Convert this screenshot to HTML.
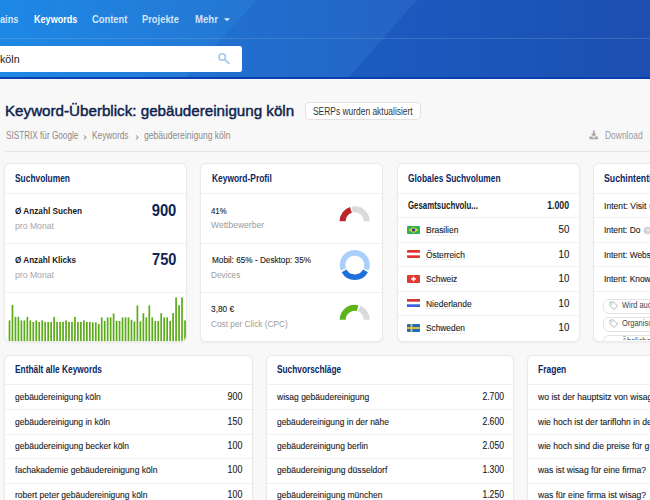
<!DOCTYPE html>
<html><head><meta charset="utf-8">
<style>
html,body{margin:0;padding:0;}
body{width:650px;height:500px;overflow:hidden;position:relative;background:#f8f8f8;font-family:"Liberation Sans",sans-serif;}
.abs{position:absolute;}
.t{position:absolute;white-space:nowrap;line-height:1;font-family:"Liberation Sans",sans-serif;}
#hdr{position:absolute;left:0;top:0;}
#search{position:absolute;left:-10px;top:45.5px;width:252px;height:26.5px;background:#fff;border-radius:2.5px;}
.card{position:absolute;background:#fff;border:1px solid #eaeaea;border-radius:6px;box-shadow:0 0.5px 2px rgba(0,0,0,0.05);box-sizing:border-box;overflow:hidden;}
.sep{position:absolute;height:1px;background:#f0f0f0;}
.dot{position:absolute;height:0;border-bottom:1px dotted #dedede;}
.pill{position:absolute;border:1px solid #e3e3e3;border-radius:6px;background:#fff;box-sizing:border-box;}
</style></head><body>
<svg id="hdr" width="650" height="79" viewBox="0 0 650 79">
<defs>
<linearGradient id="gA" gradientUnits="userSpaceOnUse" x1="0" y1="0" x2="260" y2="0"><stop offset="0" stop-color="#1e88e5"/><stop offset="1" stop-color="#2576d2"/></linearGradient>
<linearGradient id="gB" gradientUnits="userSpaceOnUse" x1="180" y1="0" x2="420" y2="0"><stop offset="0" stop-color="#1f72d2"/><stop offset="1" stop-color="#2563c3"/></linearGradient>
<linearGradient id="gC" gradientUnits="userSpaceOnUse" x1="340" y1="0" x2="650" y2="0"><stop offset="0" stop-color="#1b5cc2"/><stop offset="1" stop-color="#1c4fb0"/></linearGradient>
</defs>
<rect x="0" y="0" width="650" height="79" fill="url(#gC)"/>
<polygon points="0,0 417,0 347.5,79 0,79" fill="url(#gB)"/>
<polygon points="0,0 257,0 184.3,79 0,79" fill="url(#gA)"/>
<rect x="0" y="38" width="650" height="1" fill="rgba(255,255,255,0.13)"/>
<rect x="0" y="77" width="650" height="2" fill="#0a3fb2"/>
</svg>
<div id="search"></div>
<svg class="abs" style="left:216px;top:51px" width="16" height="16" viewBox="0 0 16 16"><circle cx="6.2" cy="6" r="3.2" fill="none" stroke="#a3c8f0" stroke-width="1.6"/><line x1="8.6" y1="8.4" x2="12.9" y2="12.4" stroke="#a3c8f0" stroke-width="1.8" stroke-linecap="round"/></svg>
<svg class="abs" style="left:222px;top:16.5px" width="10" height="6" viewBox="0 0 10 6"><path d="M2,1.2 L8,1.2 L5,4.2 Z" fill="rgba(255,255,255,0.85)"/></svg>

<div class="abs" style="left:305px;top:101.5px;width:115.5px;height:18.5px;border:1px solid #e2e2e2;border-radius:4.5px;background:#fff;box-sizing:border-box"></div>
<svg class="abs" style="left:588px;top:129px" width="12" height="12" viewBox="0 0 12 12"><rect x="4.9" y="1.5" width="1.8" height="4" fill="#a9a9a9"/><path d="M2.9,4.8 H8.7 L5.8,7.9 Z" fill="#a9a9a9"/><rect x="1.2" y="7.4" width="8.9" height="2.8" rx="0.6" fill="#a9a9a9"/><path d="M3.6,7.4 H8 L5.8,9.2 Z" fill="#f8f8f8"/><path d="M3.9,7.4 H7.7 L5.8,9 Z" fill="#a9a9a9" opacity="0"/></svg>
<svg class="abs" style="left:81px;top:133px" width="8" height="8" viewBox="0 0 8 8"><path d="M3,2.4 L5,4.4 L3,6.4" fill="none" stroke="#a0a0a0" stroke-width="1.1"/></svg>
<svg class="abs" style="left:133px;top:133px" width="8" height="8" viewBox="0 0 8 8"><path d="M3,2.4 L5,4.4 L3,6.4" fill="none" stroke="#a0a0a0" stroke-width="1.1"/></svg>
<div class="abs" style="left:5px;top:150.5px;width:645px;height:1px;background:#e6e6e6"></div>

<!-- top cards -->
<div class="card" style="left:4px;top:163px;width:183px;height:179px">
 <div class="sep" style="left:0;top:29.3px;width:182px"></div>
 <div class="sep" style="left:0;top:78.8px;width:182px"></div>
 <div class="sep" style="left:0;top:127.6px;width:182px"></div>
 <svg class="abs" style="left:0px;top:128px" width="185" height="52" viewBox="0 0 185 52"><g fill="#5aab17">
<rect x="3.65" y="28.40" width="1.7" height="23.00"/>
<rect x="6.62" y="12.90" width="1.7" height="38.50"/>
<rect x="9.60" y="24.90" width="1.7" height="26.50"/>
<rect x="12.57" y="24.90" width="1.7" height="26.50"/>
<rect x="15.55" y="28.40" width="1.7" height="23.00"/>
<rect x="18.52" y="28.40" width="1.7" height="23.00"/>
<rect x="21.50" y="24.90" width="1.7" height="26.50"/>
<rect x="24.47" y="28.40" width="1.7" height="23.00"/>
<rect x="27.45" y="29.90" width="1.7" height="21.50"/>
<rect x="30.42" y="28.40" width="1.7" height="23.00"/>
<rect x="33.40" y="29.90" width="1.7" height="21.50"/>
<rect x="36.37" y="28.40" width="1.7" height="23.00"/>
<rect x="39.34" y="29.90" width="1.7" height="21.50"/>
<rect x="42.32" y="29.90" width="1.7" height="21.50"/>
<rect x="45.29" y="29.90" width="1.7" height="21.50"/>
<rect x="48.27" y="24.90" width="1.7" height="26.50"/>
<rect x="51.24" y="29.90" width="1.7" height="21.50"/>
<rect x="54.22" y="29.90" width="1.7" height="21.50"/>
<rect x="57.19" y="29.90" width="1.7" height="21.50"/>
<rect x="60.17" y="28.40" width="1.7" height="23.00"/>
<rect x="63.14" y="29.90" width="1.7" height="21.50"/>
<rect x="66.12" y="29.90" width="1.7" height="21.50"/>
<rect x="69.09" y="24.90" width="1.7" height="26.50"/>
<rect x="72.07" y="29.90" width="1.7" height="21.50"/>
<rect x="75.04" y="29.90" width="1.7" height="21.50"/>
<rect x="78.01" y="28.40" width="1.7" height="23.00"/>
<rect x="80.99" y="29.90" width="1.7" height="21.50"/>
<rect x="83.96" y="29.90" width="1.7" height="21.50"/>
<rect x="86.94" y="30.40" width="1.7" height="21.00"/>
<rect x="89.91" y="30.40" width="1.7" height="21.00"/>
<rect x="92.89" y="31.90" width="1.7" height="19.50"/>
<rect x="95.86" y="25.40" width="1.7" height="26.00"/>
<rect x="98.84" y="28.90" width="1.7" height="22.50"/>
<rect x="101.81" y="25.40" width="1.7" height="26.00"/>
<rect x="104.79" y="25.40" width="1.7" height="26.00"/>
<rect x="107.76" y="21.40" width="1.7" height="30.00"/>
<rect x="110.73" y="28.90" width="1.7" height="22.50"/>
<rect x="113.71" y="28.90" width="1.7" height="22.50"/>
<rect x="116.68" y="25.40" width="1.7" height="26.00"/>
<rect x="119.66" y="25.40" width="1.7" height="26.00"/>
<rect x="122.63" y="25.40" width="1.7" height="26.00"/>
<rect x="125.61" y="27.90" width="1.7" height="23.50"/>
<rect x="128.58" y="29.40" width="1.7" height="22.00"/>
<rect x="131.56" y="13.40" width="1.7" height="38.00"/>
<rect x="134.53" y="29.40" width="1.7" height="22.00"/>
<rect x="137.51" y="21.20" width="1.7" height="30.20"/>
<rect x="140.48" y="25.40" width="1.7" height="26.00"/>
<rect x="143.46" y="13.40" width="1.7" height="38.00"/>
<rect x="146.43" y="25.40" width="1.7" height="26.00"/>
<rect x="149.40" y="28.90" width="1.7" height="22.50"/>
<rect x="152.38" y="28.90" width="1.7" height="22.50"/>
<rect x="155.35" y="21.20" width="1.7" height="30.20"/>
<rect x="158.33" y="25.40" width="1.7" height="26.00"/>
<rect x="161.30" y="25.40" width="1.7" height="26.00"/>
<rect x="164.28" y="28.90" width="1.7" height="22.50"/>
<rect x="167.25" y="21.00" width="1.7" height="30.40"/>
<rect x="170.23" y="5.40" width="1.7" height="46.00"/>
<rect x="173.20" y="13.20" width="1.7" height="38.20"/>
<rect x="176.18" y="5.40" width="1.7" height="46.00"/>
<rect x="179.15" y="28.40" width="1.7" height="23.00"/>
 </g></svg>
</div>
<div class="card" style="left:200px;top:163px;width:183px;height:179px">
 <div class="sep" style="left:0;top:29.3px;width:183px"></div>
 <div class="sep" style="left:0;top:78.8px;width:183px"></div>
 <div class="sep" style="left:0;top:127.6px;width:183px"></div>
</div>
<svg class="abs" style="left:335px;top:203px" width="40" height="22" viewBox="0 0 40 22"><path d="M4.60,18.30 A15.1,15.1 0 0 1 14.95,3.97 L16.87,9.76 A9,9 0 0 0 10.70,18.30 Z" fill="#bb262b"/><path d="M16.39,3.57 A15.1,15.1 0 0 1 34.80,18.30 L28.70,18.30 A9,9 0 0 0 17.73,9.52 Z" fill="#dadada"/></svg>
<svg class="abs" style="left:335px;top:245px" width="40" height="40" viewBox="0 0 40 40"><path d="M33.78,25.53 A15,15 0 1 0 5.82,25.53 L11.04,23.51 A9.4,9.4 0 1 1 28.56,23.51 Z" fill="#a9cffb"/><path d="M32.95,27.32 A15,15 0 0 1 6.65,27.32 L11.56,24.62 A9.4,9.4 0 0 0 28.04,24.62 Z" fill="#1f6fda"/></svg>
<svg class="abs" style="left:335px;top:298px" width="40" height="25" viewBox="0 0 40 25"><path d="M4.60,21.80 A15.1,15.1 0 0 1 23.40,7.16 L21.91,13.07 A9,9 0 0 0 10.70,21.80 Z" fill="#5cb31a"/><path d="M25.31,7.78 A15.1,15.1 0 0 1 34.80,21.80 L28.70,21.80 A9,9 0 0 0 23.04,13.44 Z" fill="#dadada"/></svg>
<div class="card" style="left:397px;top:163px;width:183px;height:179px">
 <div class="sep" style="left:0;top:29.3px;width:182px"></div>
 <div class="sep" style="left:0;top:53.0px;width:182px"></div>
 <div class="sep" style="left:0;top:77.6px;width:182px"></div>
 <div class="sep" style="left:0;top:102.2px;width:182px"></div>
 <div class="sep" style="left:0;top:126.8px;width:182px"></div>
 <div class="sep" style="left:0;top:151.4px;width:182px"></div>
</div>
<!-- flags -->
<svg class="abs" style="left:407.2px;top:225.8px" width="13" height="8" viewBox="0 0 13 8"><rect width="13" height="8" rx="1" fill="#2bb35a"/><path d="M6.5,1 L11.5,4 L6.5,7 L1.5,4 Z" fill="#f5d41a"/><circle cx="6.5" cy="4" r="1.8" fill="#2c47a5"/></svg>
<svg class="abs" style="left:407.2px;top:250.2px" width="13" height="8" viewBox="0 0 13 8"><rect width="13" height="8" rx="1" fill="#e2322f"/><rect y="2.7" width="13" height="2.6" fill="#fff"/></svg>
<svg class="abs" style="left:407.2px;top:274.6px" width="13" height="8" viewBox="0 0 13 8"><rect width="13" height="8" rx="1" fill="#e03a31"/><rect x="5.7" y="1.7" width="1.6" height="4.6" fill="#fff"/><rect x="4.2" y="3.2" width="4.6" height="1.6" fill="#fff"/></svg>
<svg class="abs" style="left:407.2px;top:299px" width="13" height="8" viewBox="0 0 13 8"><rect width="13" height="8" rx="1" fill="#fff"/><rect width="13" height="2.7" fill="#d83434"/><rect y="5.3" width="13" height="2.7" fill="#3c5fdc"/></svg>
<svg class="abs" style="left:407.2px;top:324px" width="13" height="8" viewBox="0 0 13 8"><rect width="13" height="8" rx="1" fill="#1f6cbd"/><rect x="3.6" width="1.7" height="8" fill="#f7c72b"/><rect y="3.15" width="13" height="1.7" fill="#f7c72b"/></svg>
<div class="dot" style="left:426px;top:234.5px;width:32.4px"></div>
<div class="dot" style="left:426px;top:259.1px;width:38.9px"></div>
<div class="dot" style="left:426px;top:283.6px;width:31.3px"></div>
<div class="dot" style="left:426px;top:308px;width:45.7px"></div>
<div class="dot" style="left:426px;top:332.6px;width:38.9px"></div>

<div class="card" style="left:593px;top:163px;width:70px;height:179px">
 <div class="sep" style="left:0;top:29.2px;width:70px"></div>
 <div class="sep" style="left:0;top:53.2px;width:70px"></div>
 <div class="sep" style="left:0;top:78.0px;width:70px"></div>
 <div class="sep" style="left:0;top:102.0px;width:70px"></div>
 <div class="sep" style="left:0;top:127.0px;width:70px"></div>
 <div class="pill" style="left:9.3px;top:134.5px;width:80px;height:15.5px"></div>
 <div class="pill" style="left:9.3px;top:152.5px;width:80px;height:15.5px"></div>
 <div class="pill" style="left:9.3px;top:170.5px;width:80px;height:15.5px"></div>
</div>
<svg class="abs" style="left:642.5px;top:226px" width="9" height="9" viewBox="0 0 9 9"><circle cx="4.5" cy="4.5" r="3.7" fill="#cfcfcf"/><text x="4.5" y="6.8" font-size="6" text-anchor="middle" fill="#fff" font-family="Liberation Sans" font-weight="700">?</text></svg>
<svg class="abs" style="left:647.5px;top:201.5px" width="9" height="9" viewBox="0 0 9 9"><circle cx="4.5" cy="4.5" r="3.7" fill="#cfcfcf"/></svg>
<svg class="abs" style="left:608px;top:300px" width="11" height="11" viewBox="0 0 11 11"><path d="M2,2 H5.5 L9.5,6 L6,9.5 L2,5.5 Z" fill="none" stroke="#b5b5b5" stroke-width="1"/><circle cx="4" cy="4" r="0.7" fill="#b5b5b5"/></svg>
<svg class="abs" style="left:608px;top:318px" width="11" height="11" viewBox="0 0 11 11"><path d="M2,2 H5.5 L9.5,6 L6,9.5 L2,5.5 Z" fill="none" stroke="#b5b5b5" stroke-width="1"/><circle cx="4" cy="4" r="0.7" fill="#b5b5b5"/></svg>

<!-- bottom cards -->
<div class="card" style="left:4px;top:355px;width:249px;height:160px">
 <div class="sep" style="left:0;top:28.0px;width:248px"></div>
 <div class="sep" style="left:0;top:53.2px;width:248px"></div>
 <div class="sep" style="left:0;top:77.9px;width:248px"></div>
 <div class="sep" style="left:0;top:102.4px;width:248px"></div>
 <div class="sep" style="left:0;top:127.1px;width:248px"></div>
</div>
<div class="card" style="left:266px;top:355px;width:248px;height:160px">
 <div class="sep" style="left:0;top:28.0px;width:248px"></div>
 <div class="sep" style="left:0;top:53.2px;width:248px"></div>
 <div class="sep" style="left:0;top:77.9px;width:248px"></div>
 <div class="sep" style="left:0;top:102.4px;width:248px"></div>
 <div class="sep" style="left:0;top:127.1px;width:248px"></div>
</div>
<div class="card" style="left:527px;top:355px;width:140px;height:160px">
 <div class="sep" style="left:0;top:28.0px;width:248px"></div>
 <div class="sep" style="left:0;top:53.2px;width:248px"></div>
 <div class="sep" style="left:0;top:77.9px;width:248px"></div>
 <div class="sep" style="left:0;top:102.4px;width:248px"></div>
 <div class="sep" style="left:0;top:127.1px;width:248px"></div>
</div>
<span class="t" style="right:631.20px;transform-origin:100% 0;top:14.00px;font-size:11px;font-weight:700;color:rgba(255,255,255,0.82);transform:scaleX(0.8400);">Domains</span>
<span class="t" style="left:33.80px;transform-origin:0 0;top:14.00px;font-size:11px;font-weight:700;color:#ffffff;transform:scaleX(0.8254);">Keywords</span>
<span class="t" style="left:91.90px;transform-origin:0 0;top:14.00px;font-size:11px;font-weight:700;color:rgba(255,255,255,0.82);transform:scaleX(0.8520);">Content</span>
<span class="t" style="left:142.40px;transform-origin:0 0;top:14.00px;font-size:11px;font-weight:700;color:rgba(255,255,255,0.82);transform:scaleX(0.8498);">Projekte</span>
<span class="t" style="left:194.50px;transform-origin:0 0;top:14.00px;font-size:11px;font-weight:700;color:rgba(255,255,255,0.82);transform:scaleX(0.8713);">Mehr</span>
<span class="t" style="left:0.40px;transform-origin:0 0;top:54.00px;font-size:11.2px;font-weight:400;color:#1b1b1b;transform:scaleX(0.9546);">köln</span>
<span class="t" style="right:653.00px;transform-origin:100% 0;top:54.00px;font-size:11.2px;font-weight:400;color:#1b1b1b;transform:scaleX(0.9000);">gebäudereinigung</span>
<span class="t" style="left:5.00px;transform-origin:0 0;top:103.00px;font-size:15px;font-weight:400;color:#0e1f4d;transform:scaleX(1.0111);-webkit-text-stroke:0.45px currentColor;">Keyword-Überblick: gebäudereinigung köln</span>
<span class="t" style="left:313.00px;transform-origin:0 0;top:107.00px;font-size:10px;font-weight:400;color:#333;transform:scaleX(0.8421);">SERPs wurden aktualisiert</span>
<span class="t" style="left:5.50px;transform-origin:0 0;top:131.00px;font-size:10.2px;font-weight:400;color:#8a8a8a;transform:scaleX(0.8031);">SISTRIX für Google</span>
<span class="t" style="left:92.30px;transform-origin:0 0;top:131.00px;font-size:10.2px;font-weight:400;color:#8a8a8a;transform:scaleX(0.8159);">Keywords</span>
<span class="t" style="left:143.50px;transform-origin:0 0;top:131.00px;font-size:10.2px;font-weight:400;color:#8a8a8a;transform:scaleX(0.8390);">gebäudereinigung köln</span>
<span class="t" style="left:605.00px;transform-origin:0 0;top:131.00px;font-size:10px;font-weight:400;color:#9a9a9a;transform:scaleX(0.8452);">Download</span>
<span class="t" style="left:14.85px;transform-origin:0 0;top:174.00px;font-size:10.4px;font-weight:700;color:#0d275f;transform:scaleX(0.8072);">Suchvolumen</span>
<span class="t" style="left:14.90px;transform-origin:0 0;top:206.00px;font-size:9.6px;font-weight:700;color:#1a1a1a;transform:scaleX(0.8543);">Ø Anzahl Suchen</span>
<span class="t" style="left:14.90px;transform-origin:0 0;top:221.00px;font-size:9.6px;font-weight:400;color:#a6a6a6;transform:scaleX(0.9004);">pro Monat</span>
<span class="t" style="right:473.30px;transform-origin:100% 0;top:203.00px;font-size:15.8px;font-weight:700;color:#0f2353;transform:scaleX(0.9370);">900</span>
<span class="t" style="left:14.90px;transform-origin:0 0;top:255.00px;font-size:9.6px;font-weight:700;color:#1a1a1a;transform:scaleX(0.8468);">Ø Anzahl Klicks</span>
<span class="t" style="left:14.90px;transform-origin:0 0;top:270.00px;font-size:9.6px;font-weight:400;color:#a6a6a6;transform:scaleX(0.9004);">pro Monat</span>
<span class="t" style="right:473.30px;transform-origin:100% 0;top:252.00px;font-size:15.8px;font-weight:700;color:#0f2353;transform:scaleX(0.9219);">750</span>
<span class="t" style="left:211.50px;transform-origin:0 0;top:174.00px;font-size:10.4px;font-weight:700;color:#0d275f;transform:scaleX(0.8091);">Keyword-Profil</span>
<span class="t" style="left:211.30px;transform-origin:0 0;top:206.00px;font-size:9.6px;font-weight:400;color:#1c1c1c;transform:scaleX(0.8176);-webkit-text-stroke:0.12px currentColor;">41%</span>
<span class="t" style="left:211.30px;transform-origin:0 0;top:220.00px;font-size:9.6px;font-weight:400;color:#9c9c9c;transform:scaleX(0.8901);">Wettbewerber</span>
<span class="t" style="left:211.50px;transform-origin:0 0;top:255.00px;font-size:9.6px;font-weight:400;color:#1c1c1c;transform:scaleX(0.8555);-webkit-text-stroke:0.12px currentColor;">Mobil: 65% - Desktop: 35%</span>
<span class="t" style="left:211.30px;transform-origin:0 0;top:270.00px;font-size:9.6px;font-weight:400;color:#9c9c9c;transform:scaleX(0.8586);">Devices</span>
<span class="t" style="left:211.30px;transform-origin:0 0;top:304.00px;font-size:9.6px;font-weight:400;color:#1c1c1c;transform:scaleX(0.8693);-webkit-text-stroke:0.12px currentColor;">3,80 €</span>
<span class="t" style="left:211.30px;transform-origin:0 0;top:319.00px;font-size:9.6px;font-weight:400;color:#9c9c9c;transform:scaleX(0.8615);">Cost per Click (CPC)</span>
<span class="t" style="left:407.80px;transform-origin:0 0;top:174.00px;font-size:10.4px;font-weight:700;color:#0d275f;transform:scaleX(0.8050);">Globales Suchvolumen</span>
<span class="t" style="left:407.60px;transform-origin:0 0;top:201.00px;font-size:10px;font-weight:700;color:#1a1a1a;transform:scaleX(0.7861);">Gesamtsuchvolu...</span>
<span class="t" style="right:81.00px;transform-origin:100% 0;top:201.00px;font-size:10px;font-weight:700;color:#1a1a1a;transform:scaleX(0.8749);">1.000</span>
<span class="t" style="left:426.00px;transform-origin:0 0;top:225.00px;font-size:9.6px;font-weight:400;color:#1c1c1c;transform:scaleX(0.8805);-webkit-text-stroke:0.12px currentColor;">Brasilien</span>
<span class="t" style="right:81.00px;transform-origin:100% 0;top:225.00px;font-size:10.2px;font-weight:400;color:#1c1c1c;transform:scaleX(0.9500);-webkit-text-stroke:0.12px currentColor;">50</span>
<span class="t" style="left:426.00px;transform-origin:0 0;top:250.00px;font-size:9.6px;font-weight:400;color:#1c1c1c;transform:scaleX(0.8791);-webkit-text-stroke:0.12px currentColor;">Österreich</span>
<span class="t" style="right:81.00px;transform-origin:100% 0;top:250.00px;font-size:10.2px;font-weight:400;color:#1c1c1c;transform:scaleX(0.9500);-webkit-text-stroke:0.12px currentColor;">10</span>
<span class="t" style="left:426.00px;transform-origin:0 0;top:274.00px;font-size:9.6px;font-weight:400;color:#1c1c1c;transform:scaleX(0.8759);-webkit-text-stroke:0.12px currentColor;">Schweiz</span>
<span class="t" style="right:81.00px;transform-origin:100% 0;top:274.00px;font-size:10.2px;font-weight:400;color:#1c1c1c;transform:scaleX(0.9500);-webkit-text-stroke:0.12px currentColor;">10</span>
<span class="t" style="left:426.00px;transform-origin:0 0;top:299.00px;font-size:9.6px;font-weight:400;color:#1c1c1c;transform:scaleX(0.8831);-webkit-text-stroke:0.12px currentColor;">Niederlande</span>
<span class="t" style="right:81.00px;transform-origin:100% 0;top:299.00px;font-size:10.2px;font-weight:400;color:#1c1c1c;transform:scaleX(0.9500);-webkit-text-stroke:0.12px currentColor;">10</span>
<span class="t" style="left:426.00px;transform-origin:0 0;top:323.00px;font-size:9.6px;font-weight:400;color:#1c1c1c;transform:scaleX(0.8681);-webkit-text-stroke:0.12px currentColor;">Schweden</span>
<span class="t" style="right:81.00px;transform-origin:100% 0;top:323.00px;font-size:10.2px;font-weight:400;color:#1c1c1c;transform:scaleX(0.9500);-webkit-text-stroke:0.12px currentColor;">10</span>
<span class="t" style="left:603.50px;transform-origin:0 0;top:174.00px;font-size:10.4px;font-weight:700;color:#0d275f;transform:scaleX(0.8400);">Suchintention</span>
<span class="t" style="left:603.80px;transform-origin:0 0;top:201.00px;font-size:9.6px;font-weight:400;color:#1c1c1c;transform:scaleX(0.8965);-webkit-text-stroke:0.12px currentColor;">Intent: Visit</span>
<span class="t" style="left:603.80px;transform-origin:0 0;top:225.00px;font-size:9.6px;font-weight:400;color:#1c1c1c;transform:scaleX(0.8748);-webkit-text-stroke:0.12px currentColor;">Intent: Do</span>
<span class="t" style="left:603.80px;transform-origin:0 0;top:250.00px;font-size:9.6px;font-weight:400;color:#1c1c1c;transform:scaleX(0.8750);-webkit-text-stroke:0.12px currentColor;">Intent: Website</span>
<span class="t" style="left:603.80px;transform-origin:0 0;top:274.00px;font-size:9.6px;font-weight:400;color:#1c1c1c;transform:scaleX(0.8750);-webkit-text-stroke:0.12px currentColor;">Intent: Know</span>
<span class="t" style="left:622.00px;transform-origin:0 0;top:301.00px;font-size:8.6px;font-weight:400;color:#444;transform:scaleX(0.8700);">Wird auch gesucht</span>
<span class="t" style="left:622.00px;transform-origin:0 0;top:319.00px;font-size:8.6px;font-weight:400;color:#444;transform:scaleX(0.8700);">Organische Suche</span>
<div style="position:absolute;left:0;top:0;width:650px;height:339.5px;overflow:hidden"><span class="t" style="left:622.00px;transform-origin:0 0;top:337.00px;font-size:8.6px;font-weight:400;color:#444;transform:scaleX(0.8700);">Ähnliche Suchen</span></div>
<span class="t" style="left:15.20px;transform-origin:0 0;top:365.00px;font-size:10.4px;font-weight:700;color:#0d275f;transform:scaleX(0.8057);">Enthält alle Keywords</span>
<span class="t" style="left:15.20px;transform-origin:0 0;top:392.00px;font-size:9.8px;font-weight:400;color:#1c1c1c;transform:scaleX(0.8653);-webkit-text-stroke:0.12px currentColor;">gebäudereinigung köln</span>
<span class="t" style="right:407.60px;transform-origin:100% 0;top:392.00px;font-size:10.4px;font-weight:400;color:#1c1c1c;transform:scaleX(0.8533);-webkit-text-stroke:0.12px currentColor;">900</span>
<span class="t" style="left:15.20px;transform-origin:0 0;top:417.00px;font-size:9.8px;font-weight:400;color:#1c1c1c;transform:scaleX(0.8676);-webkit-text-stroke:0.12px currentColor;">gebäudereinigung in köln</span>
<span class="t" style="right:407.60px;transform-origin:100% 0;top:417.00px;font-size:10.4px;font-weight:400;color:#1c1c1c;transform:scaleX(0.8533);-webkit-text-stroke:0.12px currentColor;">150</span>
<span class="t" style="left:15.20px;transform-origin:0 0;top:441.00px;font-size:9.8px;font-weight:400;color:#1c1c1c;transform:scaleX(0.8684);-webkit-text-stroke:0.12px currentColor;">gebäudereinigung becker köln</span>
<span class="t" style="right:407.60px;transform-origin:100% 0;top:441.00px;font-size:10.4px;font-weight:400;color:#1c1c1c;transform:scaleX(0.8533);-webkit-text-stroke:0.12px currentColor;">100</span>
<span class="t" style="left:15.20px;transform-origin:0 0;top:465.00px;font-size:9.8px;font-weight:400;color:#1c1c1c;transform:scaleX(0.8750);-webkit-text-stroke:0.12px currentColor;">fachakademie gebäudereinigung köln</span>
<span class="t" style="right:407.60px;transform-origin:100% 0;top:465.00px;font-size:10.4px;font-weight:400;color:#1c1c1c;transform:scaleX(0.8533);-webkit-text-stroke:0.12px currentColor;">100</span>
<span class="t" style="left:15.20px;transform-origin:0 0;top:490.00px;font-size:9.8px;font-weight:400;color:#1c1c1c;transform:scaleX(0.8688);-webkit-text-stroke:0.12px currentColor;">robert peter gebäudereinigung köln</span>
<span class="t" style="right:407.60px;transform-origin:100% 0;top:490.00px;font-size:10.4px;font-weight:400;color:#1c1c1c;transform:scaleX(0.8533);-webkit-text-stroke:0.12px currentColor;">100</span>
<span class="t" style="left:276.80px;transform-origin:0 0;top:365.00px;font-size:10.4px;font-weight:700;color:#0d275f;transform:scaleX(0.7997);">Suchvorschläge</span>
<span class="t" style="left:276.80px;transform-origin:0 0;top:392.00px;font-size:9.8px;font-weight:400;color:#1c1c1c;transform:scaleX(0.8690);-webkit-text-stroke:0.12px currentColor;">wisag gebäudereinigung</span>
<span class="t" style="right:146.00px;transform-origin:100% 0;top:392.00px;font-size:10.4px;font-weight:400;color:#1c1c1c;transform:scaleX(0.8303);-webkit-text-stroke:0.12px currentColor;">2.700</span>
<span class="t" style="left:276.80px;transform-origin:0 0;top:417.00px;font-size:9.8px;font-weight:400;color:#1c1c1c;transform:scaleX(0.8594);-webkit-text-stroke:0.12px currentColor;">gebäudereinigung in der nähe</span>
<span class="t" style="right:146.00px;transform-origin:100% 0;top:417.00px;font-size:10.4px;font-weight:400;color:#1c1c1c;transform:scaleX(0.8303);-webkit-text-stroke:0.12px currentColor;">2.600</span>
<span class="t" style="left:276.80px;transform-origin:0 0;top:441.00px;font-size:9.8px;font-weight:400;color:#1c1c1c;transform:scaleX(0.8665);-webkit-text-stroke:0.12px currentColor;">gebäudereinigung berlin</span>
<span class="t" style="right:146.00px;transform-origin:100% 0;top:441.00px;font-size:10.4px;font-weight:400;color:#1c1c1c;transform:scaleX(0.8303);-webkit-text-stroke:0.12px currentColor;">2.050</span>
<span class="t" style="left:276.80px;transform-origin:0 0;top:465.00px;font-size:9.8px;font-weight:400;color:#1c1c1c;transform:scaleX(0.8728);-webkit-text-stroke:0.12px currentColor;">gebäudereinigung düsseldorf</span>
<span class="t" style="right:146.00px;transform-origin:100% 0;top:465.00px;font-size:10.4px;font-weight:400;color:#1c1c1c;transform:scaleX(0.8303);-webkit-text-stroke:0.12px currentColor;">1.300</span>
<span class="t" style="left:276.80px;transform-origin:0 0;top:490.00px;font-size:9.8px;font-weight:400;color:#1c1c1c;transform:scaleX(0.8684);-webkit-text-stroke:0.12px currentColor;">gebäudereinigung münchen</span>
<span class="t" style="right:146.00px;transform-origin:100% 0;top:490.00px;font-size:10.4px;font-weight:400;color:#1c1c1c;transform:scaleX(0.8303);-webkit-text-stroke:0.12px currentColor;">1.250</span>
<span class="t" style="left:537.70px;transform-origin:0 0;top:365.00px;font-size:10.4px;font-weight:700;color:#0d275f;transform:scaleX(0.8166);">Fragen</span>
<span class="t" style="left:538.00px;transform-origin:0 0;top:392.00px;font-size:9.8px;font-weight:400;color:#1c1c1c;transform:scaleX(0.8780);-webkit-text-stroke:0.12px currentColor;">wo ist der hauptsitz von wisag?</span>
<span class="t" style="left:538.00px;transform-origin:0 0;top:417.00px;font-size:9.8px;font-weight:400;color:#1c1c1c;transform:scaleX(0.8780);-webkit-text-stroke:0.12px currentColor;">wie hoch ist der tariflohn in der gebäudereinigung?</span>
<span class="t" style="left:538.00px;transform-origin:0 0;top:441.00px;font-size:9.8px;font-weight:400;color:#1c1c1c;transform:scaleX(0.8780);-webkit-text-stroke:0.12px currentColor;">wie hoch sind die preise für gebäudereinigung?</span>
<span class="t" style="left:538.00px;transform-origin:0 0;top:465.00px;font-size:9.8px;font-weight:400;color:#1c1c1c;transform:scaleX(0.8780);-webkit-text-stroke:0.12px currentColor;">was ist wisag für eine firma?</span>
<span class="t" style="left:538.00px;transform-origin:0 0;top:490.00px;font-size:9.8px;font-weight:400;color:#1c1c1c;transform:scaleX(0.8780);-webkit-text-stroke:0.12px currentColor;">was für eine firma ist wisag?</span>
</body></html>
